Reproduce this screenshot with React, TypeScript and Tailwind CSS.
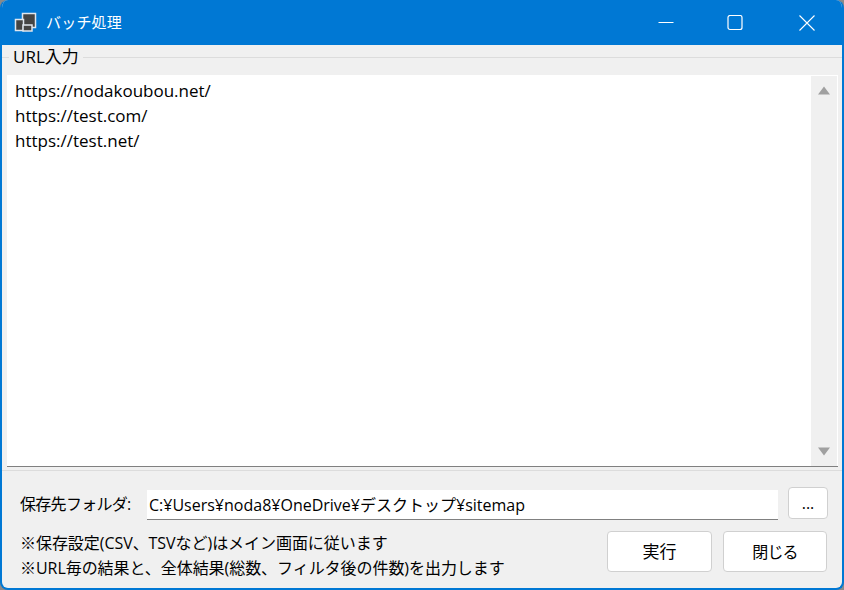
export default function App() {
  const font = "font-['Open_Sans','Noto_Sans_CJK_JP',sans-serif]";
  return (
    <div className="h-[590px] w-[844px] bg-[#8a8a8a]">
      <div className={`${font} flex h-[590px] w-[844px] flex-col overflow-hidden rounded-[8px] border-x-2 border-b-2 border-[#0078d4] bg-[#f0f0f0] text-[16px] text-black`}>
        <div className="flex h-[45px] shrink-0 items-center bg-[#0078d4] pl-[11px] text-white">
          <svg width="24" height="24" viewBox="0 0 24 24" className="shrink-0">
            <rect x="9.5" y="2.5" width="13" height="14" fill="#444" stroke="#dfe6ee" strokeWidth="1.5" />
            <rect x="2.5" y="8.5" width="8" height="11" fill="#444" stroke="#dfe6ee" strokeWidth="1.5" />
            <rect x="10" y="14" width="9" height="6" fill="#444" stroke="#dfe6ee" strokeWidth="1.5" />
          </svg>
          <span className="ml-[9px] text-[15px] leading-none tracking-[0.2px]">バッチ処理</span>
          <div className="ml-auto flex items-center">
            <div className="flex h-[45px] w-[70px] items-center justify-center pl-[2px]">
              <svg width="16" height="16" viewBox="0 0 16 16"><path d="M0.5 7.5H15.5" stroke="#fff" strokeWidth="1" fill="none" /></svg>
            </div>
            <div className="flex h-[45px] w-[70px] items-center justify-center">
              <svg width="16" height="16" viewBox="0 0 16 16"><rect x="1" y="0.5" width="14" height="14" rx="2" stroke="#fff" strokeWidth="1.2" fill="none" /></svg>
            </div>
            <div className="flex h-[45px] w-[72px] items-center justify-center pl-[2px]">
              <svg width="16" height="16" viewBox="0 0 16 16"><path d="M0.5 0.5L15.5 15.5M15.5 0.5L0.5 15.5" stroke="#fff" strokeWidth="1.1" fill="none" /></svg>
            </div>
          </div>
        </div>

        <div className="relative mt-[12px] flex h-[414px] shrink-0 flex-col border-y border-[#dcdcdc] px-[5px] pt-[17px]">
          <span className="absolute left-[7px] top-[-12px] bg-[#f0f0f0] px-[4px] text-[17px] leading-[22px]">URL入力</span>
          <div className="flex h-[392px] w-[831px] border-b border-[#808080]">
            <div className="flex-1 bg-white pl-[8px] pt-[3px] text-[17px] leading-[25px]">
              <div>https://nodakoubou.net/</div>
              <div>https://test.com/</div>
              <div>https://test.net/</div>
            </div>
            <div className="flex w-[27px] flex-col items-center justify-between border-r border-t border-white bg-[#f0f0f0] py-[10px] pr-[1px]">
              <svg width="12" height="9" viewBox="0 0 12 9"><path d="M6 0.5L12 8.5H0Z" fill="#a0a0a0" /></svg>
              <svg width="12" height="9" viewBox="0 0 12 9"><path d="M0 0.5H12L6 8.5Z" fill="#a0a0a0" /></svg>
            </div>
          </div>
        </div>

        <div className="mt-[16px] flex items-start pl-[18px]">
          <span className="mt-[5px] w-[127px] text-[16px] leading-[25px] tracking-[-0.7px]">保存先フォルダ:</span>
          <div className="mt-[3px] flex h-[30px] w-[631px] items-center border-b border-[#808080] bg-white pl-[2px] text-[16px]">C:¥Users¥noda8¥OneDrive¥デスクトップ¥sitemap</div>
          <div className="ml-[10px] flex h-[32px] w-[40px] items-center justify-center rounded-[4px] border border-[#d0d0d0] bg-white text-[16px]">...</div>
        </div>

        <div className="mt-[11px] flex items-start pl-[18px]">
          <div className="w-[587px] text-[16px] leading-[25px] tracking-[-0.05px]">
            <div>※保存設定(CSV、TSVなど)はメイン画面に従います</div>
            <div>※URL毎の結果と、全体結果(総数、フィルタ後の件数)を出力します</div>
          </div>
          <div className="flex h-[41px] w-[105px] items-center justify-center rounded-[4px] border border-[#d0d0d0] bg-white text-[17px]">実行</div>
          <div className="ml-[11px] flex h-[41px] w-[104px] items-center justify-center rounded-[4px] border border-[#d0d0d0] bg-white text-[16px] tracking-[-0.8px]">閉じる</div>
        </div>
      </div>
    </div>
  );
}
